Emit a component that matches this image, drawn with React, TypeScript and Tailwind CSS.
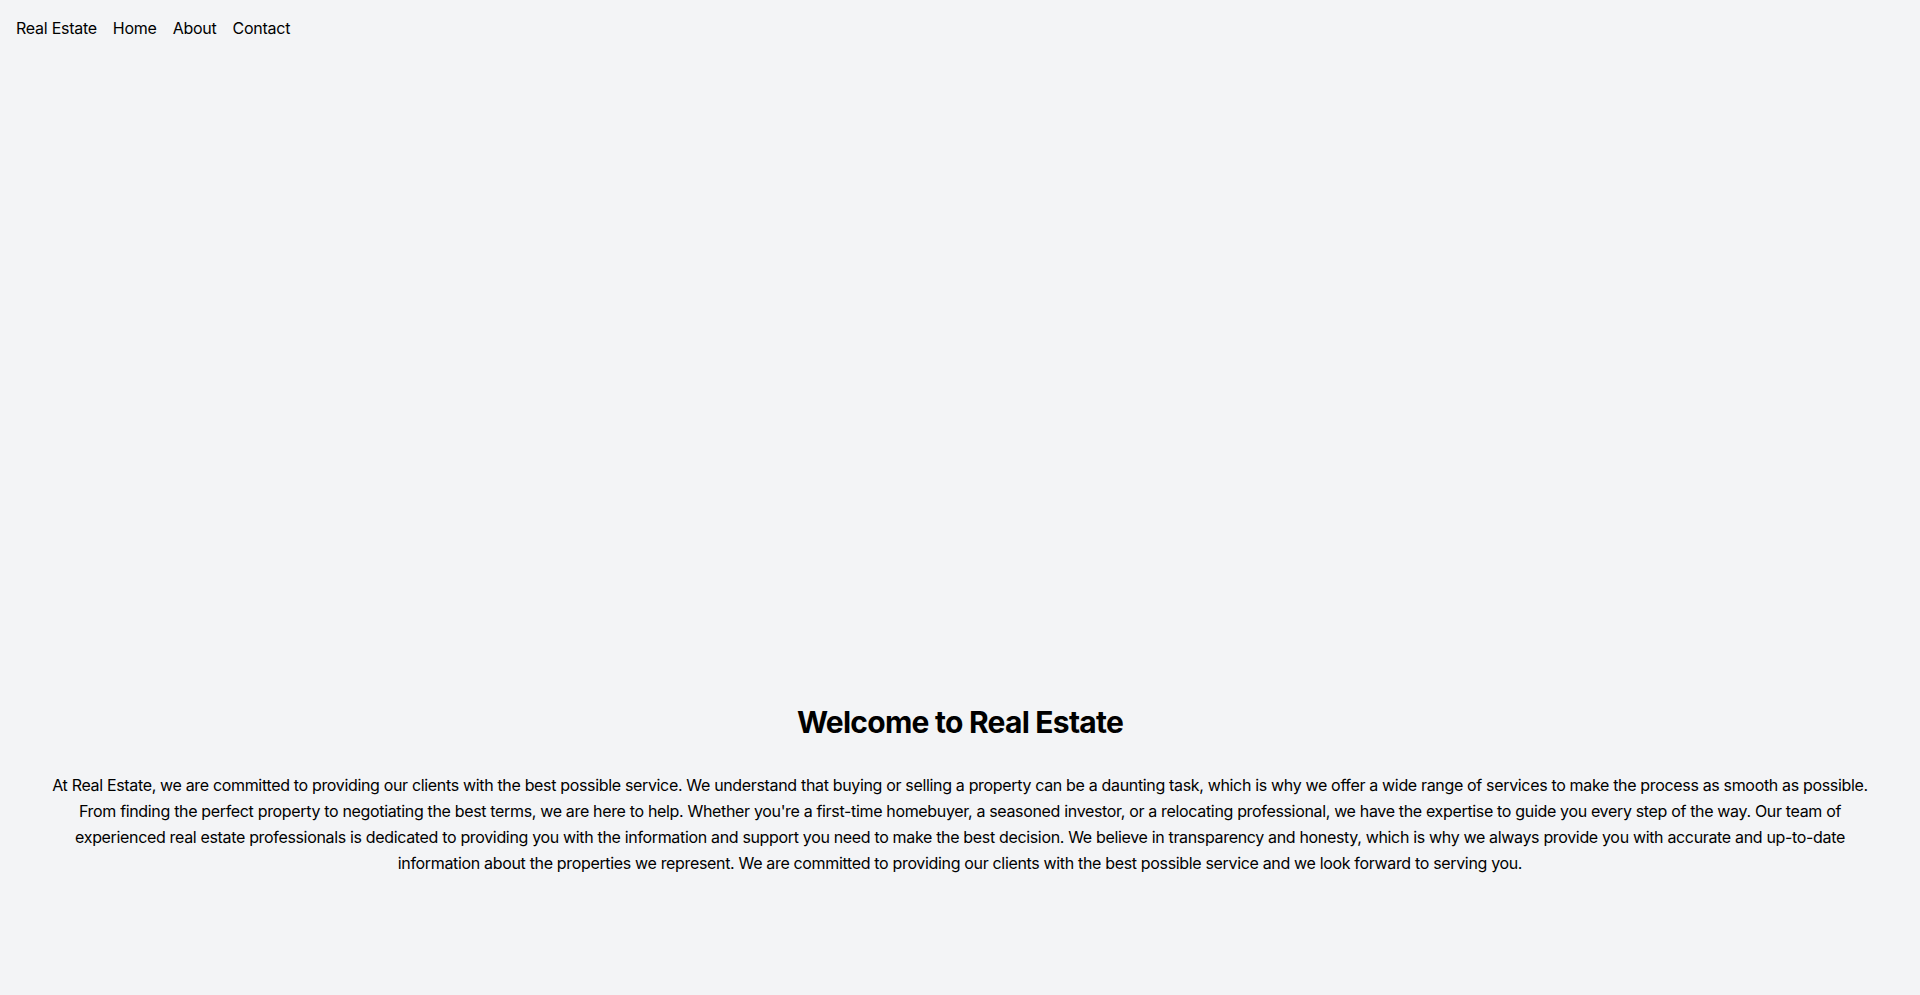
import React from "react";

export default function App() {
  return (
    <div className="min-h-screen bg-[#f3f4f6] text-black" style={{ fontFamily: "Inter, 'Noto Sans', sans-serif" }}>
      <nav className="flex items-center gap-4 p-4 text-base tracking-[-0.016em]">
        <a href="#">Real Estate</a>
        <a href="#">Home</a>
        <a href="#">About</a>
        <a href="#">Contact</a>
      </nav>
      <div className="h-[600px]" />
      <section className="px-12 py-12 text-center">
        <h1 className="mb-8 text-3xl font-bold leading-9 tracking-[-0.025em]">Welcome to Real Estate</h1>
        <p className="text-base leading-relaxed tracking-[-0.021em]">
          At Real Estate, we are committed to providing our clients with the best possible service. We understand that buying or selling a property can be a daunting task, which is why we offer a wide range of services to make the process as smooth as possible. From finding the perfect property to negotiating the best terms, we are here to help. Whether you're a first-time homebuyer, a seasoned investor, or a relocating professional, we have the expertise to guide you every step of the way. Our team of experienced real estate professionals is dedicated to providing you with the information and support you need to make the best decision. We believe in transparency and honesty, which is why we always provide you with accurate and up-to-date information about the properties we represent. We are committed to providing our clients with the best possible service and we look forward to serving you.
        </p>
      </section>
    </div>
  );
}
